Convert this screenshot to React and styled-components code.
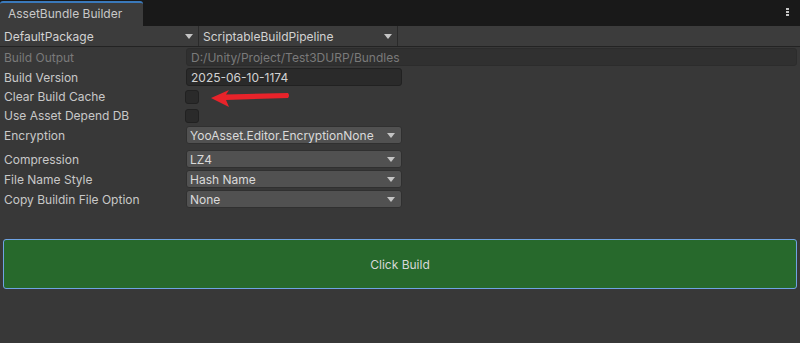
import React from "react";
import styled, { createGlobalStyle } from "styled-components";

const Global = createGlobalStyle`
  html, body { margin: 0; padding: 0; background: #383838; }
  body { font-family: Inter, "Noto Sans", sans-serif; font-size: 12px; color: #d2d2d2; }
  * { box-sizing: border-box; }
`;

const Window = styled.div`
  width: 800px;
  height: 343px;
  background: #383838;
  display: flex;
  flex-direction: column;
  overflow: hidden;
`;

const TabBar = styled.div`
  height: 26px;
  background: #191919;
  display: flex;
  align-items: flex-end;
  justify-content: space-between;
`;

const Tab = styled.div`
  width: 143px;
  height: 25px;
  background: #3c3c3c;
  border-top: 2px solid #3a79bb;
  border-radius: 3px 3px 0 0;
  padding: 3px 0 0 8px;
  color: #c8c8c8;
  font-size: 12px;
`;

const Kebab = styled.div`
  width: 3px;
  align-self: flex-start;
  margin: 8px 11px 0 0;
  display: flex;
  flex-direction: column;
  gap: 1px;
  span { width: 3px; height: 2px; background: #c4c4c4; }
`;

const Toolbar = styled.div`
  height: 21px;
  background: #3c3c3c;
  border-bottom: 1px solid #232323;
  display: flex;
`;

const ToolbarDrop = styled.div`
  width: 199px;
  border-right: 1px solid #2a2a2a;
  display: flex;
  align-items: center;
  justify-content: space-between;
  padding: 0 5px 0 4px;
  color: #d2d2d2;
`;

const Arrow = styled.span`
  width: 0;
  height: 0;
  border-left: 4px solid transparent;
  border-right: 4px solid transparent;
  border-top: 5px solid #c4c4c4;
`;

const Body = styled.div`
  display: flex;
  flex-direction: column;
  padding: 0 3px 0 4px;
`;

const Row = styled.div`
  display: flex;
  align-items: center;
  height: ${(p) => p.$h || 20}px;
  margin-top: ${(p) => p.$mt || 0}px;
`;

const Label = styled.div`
  width: 182px;
  color: ${(p) => (p.$disabled ? "#7a7a7a" : "#c8c8c8")};
  white-space: nowrap;
`;

const TextField = styled.div`
  width: ${(p) => p.$w}px;
  height: 18px;
  background: ${(p) => (p.$disabled ? "#303030" : "#2a2a2a")};
  border: 1px solid ${(p) => (p.$disabled ? "#2c2c2c" : "#212121")};
  border-radius: 3px;
  padding: 0 4px;
  display: flex;
  align-items: center;
  color: ${(p) => (p.$disabled ? "#7a7a7a" : "#d2d2d2")};
`;

const Check = styled.div`
  width: 14px;
  height: 14px;
  margin-left: -1px;
  background: #2a2a2a;
  border: 1px solid #212121;
  border-radius: 3px;
`;

const Dropdown = styled.div`
  width: 216px;
  height: 18px;
  background: #515151;
  border: 1px solid #303030;
  border-radius: 3px;
  padding: 0 6px 0 3px;
  display: flex;
  align-items: center;
  justify-content: space-between;
  color: #dadada;
`;

const CheckRow = styled(Row)`
  position: relative;
`;

const RedArrow = styled.svg`
  position: absolute;
  left: 204px;
  top: 0;
  overflow: visible;
`;

const BuildButton = styled.div`
  margin: 30px 3px 0 3px;
  height: 50px;
  background: #27692c;
  border: 1px solid #6fa3e4;
  border-radius: 3px;
  display: flex;
  align-items: center;
  justify-content: center;
  color: #d8d8d8;
`;

const Select = ({ value }) => (
  <Dropdown>
    <span>{value}</span>
    <Arrow />
  </Dropdown>
);

export default function App() {
  return (
    <Window>
      <Global />
      <TabBar>
        <Tab>AssetBundle Builder</Tab>
        <Kebab>
          <span />
          <span />
          <span />
        </Kebab>
      </TabBar>
      <Toolbar>
        <ToolbarDrop>
          <span>DefaultPackage</span>
          <Arrow />
        </ToolbarDrop>
        <ToolbarDrop>
          <span>ScriptableBuildPipeline</span>
          <Arrow />
        </ToolbarDrop>
      </Toolbar>
      <Body>
        <Row>
          <Label $disabled>Build Output</Label>
          <TextField $w={611} $disabled>D:/Unity/Project/Test3DURP/Bundles</TextField>
        </Row>
        <Row>
          <Label>Build Version</Label>
          <TextField $w={216}>2025-06-10-1174</TextField>
        </Row>
        <CheckRow $h={19}>
          <Label>Clear Build Cache</Label>
          <Check />
          <RedArrow width="82" height="20" viewBox="0 0 82 20">
            <path d="M3 11 L21 3 L18 7.5 L80 6 Q82 8.5 80 11 L18 13 L21 20 Z" fill="#e8232a" />
          </RedArrow>
        </CheckRow>
        <Row $h={19}>
          <Label>Use Asset Depend DB</Label>
          <Check />
        </Row>
        <Row $h={20}>
          <Label>Encryption</Label>
          <Select value="YooAsset.Editor.EncryptionNone" />
        </Row>
        <Row $mt={4}>
          <Label>Compression</Label>
          <Select value="LZ4" />
        </Row>
        <Row>
          <Label>File Name Style</Label>
          <Select value="Hash Name" />
        </Row>
        <Row>
          <Label>Copy Buildin File Option</Label>
          <Select value="None" />
        </Row>
      </Body>
      <BuildButton>Click Build</BuildButton>
    </Window>
  );
}
